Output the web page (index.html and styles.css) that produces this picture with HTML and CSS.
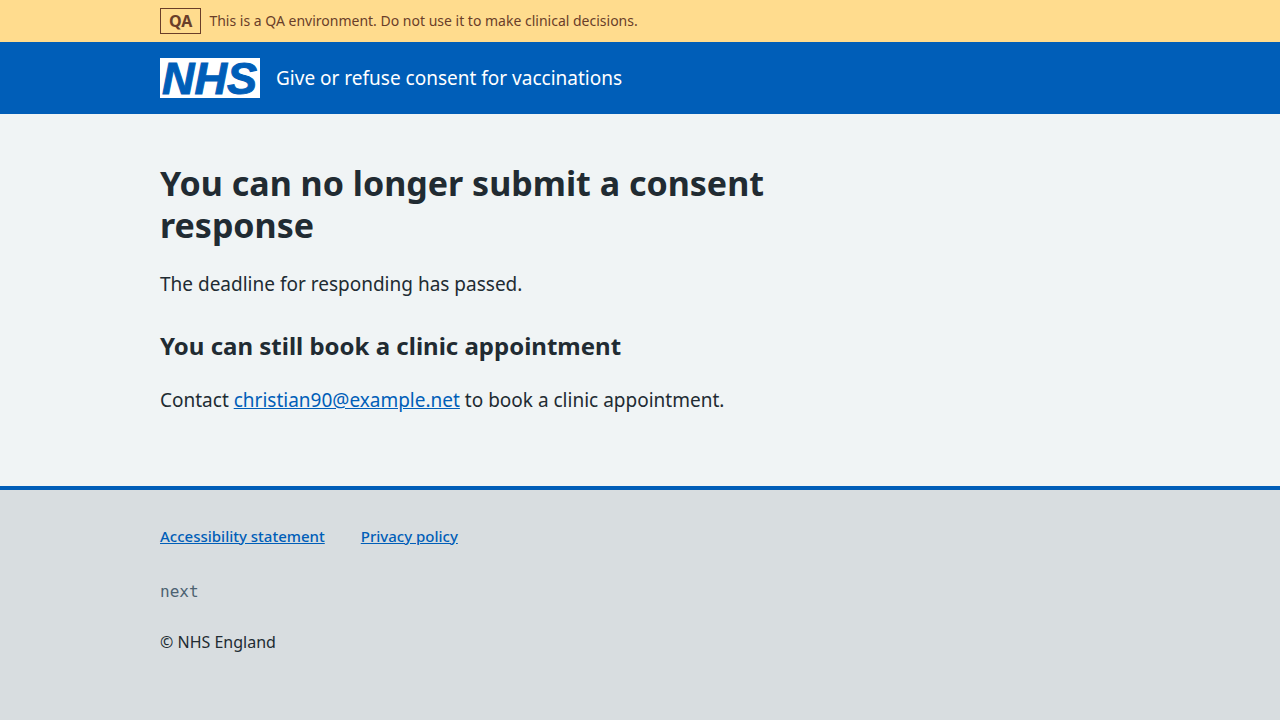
FILE: index.html
```html
<!DOCTYPE html>
<html lang="en">
<head>
<meta charset="utf-8">
<meta name="viewport" content="width=device-width, initial-scale=1">
<title>You can no longer submit a consent response</title>
<link rel="stylesheet" href="styles.css">
</head>
<body>
<div class="environment">
  <div class="container environment-inner">
    <strong class="tag">QA</strong>
    <span>This is a QA environment. Do not use it to make clinical decisions.</span>
  </div>
</div>
<header class="header">
  <div class="container header-inner">
    <svg class="logo" viewBox="0 0 100 40" width="100" height="40" role="img" aria-label="NHS">
      <rect width="100" height="40" fill="#fff"/>
      <text class="logo-text" x="2" y="36">NHS</text>
    </svg>
    <span class="service">Give or refuse consent for vaccinations</span>
  </div>
</header>
<main class="container main">
  <div class="column">
    <h1 class="title">You can no longer submit a consent response</h1>
    <p class="text">The deadline for responding has passed.</p>
    <h2 class="subtitle">You can still book a clinic appointment</h2>
    <p class="text">Contact <a class="link" href="mailto:christian90@example.net">christian90@example.net</a> to book a clinic appointment.</p>
  </div>
</main>
<footer class="footer">
  <div class="container">
    <ul class="footer-links">
      <li><a class="link" href="#">Accessibility statement</a></li>
      <li><a class="link" href="#">Privacy policy</a></li>
    </ul>
    <p class="version">next</p>
    <p class="copyright">© NHS England</p>
  </div>
</footer>
</body>
</html>
```

FILE: styles.css
```css
* { box-sizing: border-box; }

body {
  display: flex;
  flex-direction: column;
  min-height: 100vh;
  margin: 0;
  background: #f0f4f5;
  color: #212b32;
  font-family: "Noto Sans", Arial, sans-serif;
}

.container {
  width: 100%;
  max-width: 1024px;
  margin: 0 auto;
  padding: 0 32px;
}

.environment {
  background: #ffdc8e;
  color: #6a3e29;
  font-size: 14px;
  line-height: 24px;
}

.environment-inner {
  display: flex;
  align-items: center;
  gap: 8px;
  padding-top: 8px;
  padding-bottom: 8px;
}

.tag {
  padding: 0 8px;
  border: 1px solid #6a3e29;
  font-size: 16px;
  font-weight: 700;
}

.header { background: #005eb8; color: #fff; }

.header-inner {
  display: flex;
  align-items: center;
  gap: 16px;
  padding-top: 16px;
  padding-bottom: 16px;
}

.logo { display: block; flex: none; overflow: visible; }

.logo-text {
  fill: #005eb8;
  stroke: #005eb8;
  stroke-width: 1px;
  font-family: "Liberation Sans", Arial, sans-serif;
  font-size: 45px;
  font-style: italic;
  font-weight: 700;
}

.service { font-size: 19px; line-height: 28px; }

.main { padding-top: 48px; padding-bottom: 72px; }

.column { width: 66.66%; }

.title {
  margin: 0 0 24px;
  font-size: 34px;
  font-weight: 700;
  line-height: 42px;
}

.text {
  margin: 0;
  font-size: 19px;
  line-height: 28px;
}

.subtitle {
  margin: 32px 0 24px;
  font-size: 24px;
  font-weight: 700;
  line-height: 32px;
}

.link { color: #005eb8; text-decoration: underline; }

.footer {
  flex: 1;
  padding: 32px 0;
  border-top: 4px solid #005eb8;
  background: #d8dde0;
  font-size: 16px;
  line-height: 28px;
}

.footer-links {
  display: flex;
  flex-wrap: wrap;
  gap: 36px;
  margin: 0;
  padding: 0;
  list-style: none;
  font-size: 15px;
  font-weight: 500;
}

.version {
  margin: 28px 0 22px;
  color: #4c6272;
  font-family: "DejaVu Sans Mono", monospace;
}

.copyright { margin: 0; }
```
